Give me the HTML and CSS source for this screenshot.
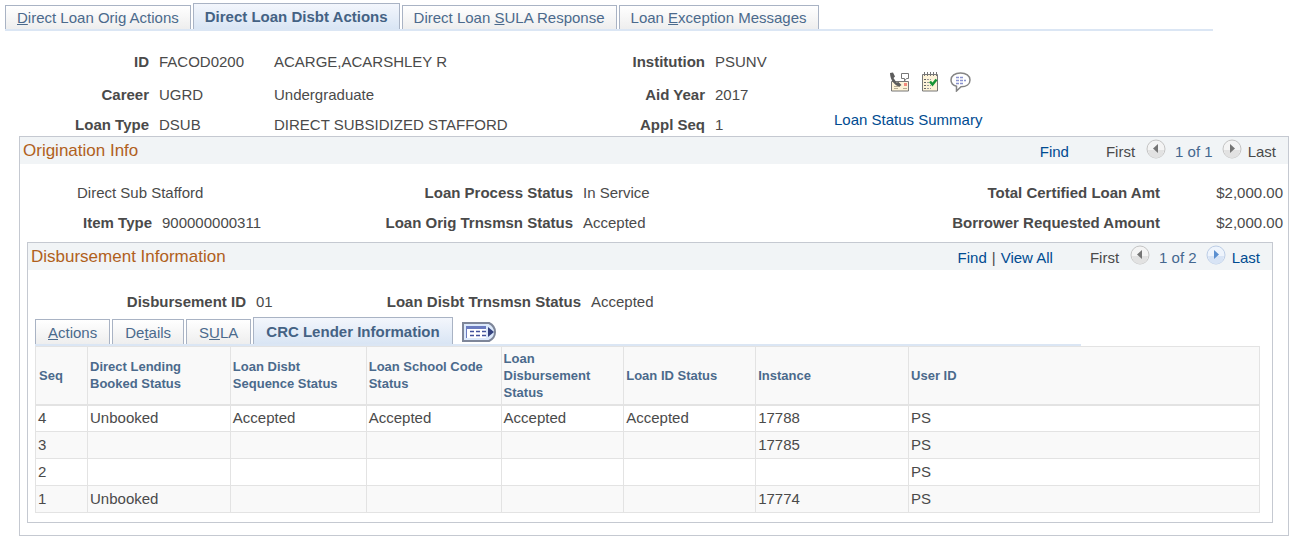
FILE: index.html
```html
<!DOCTYPE html>
<html lang="en">
<head>
    <meta charset="utf-8">
    <title>Direct Loan Disbt Actions</title>
    <link rel="stylesheet" href="styles.css">
</head>
<body>
    <nav class="tabs page-tabs">
        <a class="tab" href="#"><u>D</u>irect Loan Orig Actions</a>
        <a class="tab active" href="#">Direct Loan Disbt Actions</a>
        <a class="tab" href="#">Direct Loan <u>S</u>ULA Response</a>
        <a class="tab" href="#">Loan <u>E</u>xception Messages</a>
    </nav>

    <div class="student">
        <span class="label">ID</span><span>FACOD0200</span><span>ACARGE,ACARSHLEY R</span>
        <span class="label">Institution</span><span>PSUNV</span>
        <span class="label">Career</span><span>UGRD</span><span>Undergraduate</span>
        <span class="label">Aid Year</span><span>2017</span>
        <span class="label">Loan Type</span><span>DSUB</span><span>DIRECT SUBSIDIZED STAFFORD</span>
        <span class="label">Appl Seq</span><span>1</span>
        <div class="side">
            <div class="icons">
                <button class="icon-btn" aria-label="Communications">
                    <svg width="21" height="20" viewBox="0 0 21 20">
                        <path d="M2.500 9.500h17v9.500h-17z" fill="#fdf3d8" stroke="#777"/>
                        <path d="M5 14.500h6M5 16.500h4M14 16.500h4" stroke="#b5ab92"/>
                        <path d="M12.500 1.500h7v5h-2l-2 2.500v-2.500h-3z" fill="#fff" stroke="#777"/>
                        <path d="M1 1l3-.5 2 4-1.500 1.500 3 4.500 2-.5 3 3-2 1.500C6 14 1 8 1 1z" fill="#5c5c5c"/>
                        <path d="M15 11h3v3h-3z" fill="#f28a7c"/>
                    </svg>
                </button>
                <button class="icon-btn" aria-label="Checklists">
                    <svg width="18" height="20" viewBox="0 0 18 20">
                        <path d="M1.500 2.500h15v16.500h-15z" fill="#fdf3d8" stroke="#777"/>
                        <path d="M3.500 0v4M6.500 0v4M9.500 0v4M12.500 0v4M15.500 0v4" stroke="#777"/>
                        <path d="M3 7.500h2M3 10.500h2M3 13.500h2M3 16.500h2" stroke="#666"/>
                        <path d="M6 7.500h4M6 10.500h2M6 13.500h4M6 16.500h4" stroke="#999" stroke-dasharray="2 1"/>
                        <path d="M9 9.500l2.500 3 4-5" fill="none" stroke="#169436" stroke-width="2.500"/>
                    </svg>
                </button>
                <button class="icon-btn" aria-label="Comments">
                    <svg width="21" height="20" viewBox="0 0 21 20">
                        <path d="M10.500 1C5 1 1 3.800 1 8c0 3 2 5.300 5.500 6.300V19l4.500-4.200c5.500 0 9-2.800 9-6.800 0-4.200-4-7-9.500-7z" fill="#fff" stroke="#858585" stroke-width="1.500"/>
                        <path d="M6 5.500h8M6 8.500h10M6 11.500h8" stroke="#8b93cf" stroke-width="1.500" stroke-dasharray="3 1"/>
                    </svg>
                </button>
            </div>
            <a class="link" href="#">Loan Status Summary</a>
        </div>
    </div>

    <section class="panel origination">
        <div class="panel-head">
            <h2>Origination Info</h2>
            <div class="pager">
                <a class="link" href="#">Find</a>
                <span class="first">First</span>
                <button class="arrow" aria-label="Previous"><svg width="20" height="20" viewBox="0 0 20 20"><circle cx="10" cy="10" r="9" fill="#f4f4f4" stroke="#c4c4c4"/><path d="M2 11a8 8 0 0 0 16 0z" fill="#e2e2e2"/><path d="M12 5v9L7 9.500z" fill="#757575"/></svg></button>
                <span class="count">1 of 1</span>
                <button class="arrow" aria-label="Next"><svg width="20" height="20" viewBox="0 0 20 20"><circle cx="10" cy="10" r="9" fill="#f4f4f4" stroke="#c4c4c4"/><path d="M2 11a8 8 0 0 0 16 0z" fill="#e2e2e2"/><path d="M8 5v9l5-4.500z" fill="#757575"/></svg></button>
                <span class="last">Last</span>
            </div>
        </div>
        <div class="loan">
            <span class="loan-name">Direct Sub Stafford</span>
            <span class="label">Loan Process Status</span><span>In Service</span>
            <span class="label">Total Certified Loan Amt</span><span class="amount">$2,000.00</span>
            <span class="label">Item Type</span><span>900000000311</span>
            <span class="label">Loan Orig Trnsmsn Status</span><span>Accepted</span>
            <span class="label">Borrower Requested Amount</span><span class="amount">$2,000.00</span>
        </div>

        <section class="panel disbursement">
            <div class="panel-head">
                <h2>Disbursement Information</h2>
                <div class="pager">
                    <a class="link" href="#">Find</a>
                    <span class="bar">|</span>
                    <a class="link" href="#">View All</a>
                    <span class="first">First</span>
                    <button class="arrow" aria-label="Previous"><svg width="20" height="20" viewBox="0 0 20 20"><circle cx="10" cy="10" r="9" fill="#f4f4f4" stroke="#c4c4c4"/><path d="M2 11a8 8 0 0 0 16 0z" fill="#e2e2e2"/><path d="M12 5v9L7 9.500z" fill="#757575"/></svg></button>
                    <span class="count">1 of 2</span>
                    <button class="arrow" aria-label="Next"><svg width="20" height="20" viewBox="0 0 20 20"><circle cx="10" cy="10" r="9" fill="#eef4fc" stroke="#bccde6"/><path d="M2 11a8 8 0 0 0 16 0z" fill="#d8e4f5"/><path d="M8 5v9l5-4.500z" fill="#5b8fd0"/></svg></button>
                    <a class="link last" href="#">Last</a>
                </div>
            </div>
            <div class="disbt">
                <span class="label">Disbursement ID</span><span>01</span>
                <span class="label">Loan Disbt Trnsmsn Status</span><span>Accepted</span>
            </div>
            <nav class="tabs grid-tabs">
                <a class="tab" href="#"><u>A</u>ctions</a>
                <a class="tab" href="#">De<u>t</u>ails</a>
                <a class="tab" href="#">S<u>U</u>LA</a>
                <a class="tab active" href="#">CRC Lender Information</a>
                <button class="icon-btn show-all" aria-label="Show all columns">
                    <svg width="34" height="20" viewBox="0 0 34 20">
                        <path d="M1 1h26q6 3 6 9t-6 9H1z" fill="#dce9fb" stroke="#7e8699" stroke-width="2"/>
                        <path d="M4 4h20v12H4z" fill="#fff"/>
                        <path d="M4 5.500h20" stroke="#6a7bc0" stroke-width="3"/>
                        <path d="M4.500 5v11" stroke="#6a7bc0"/>
                        <path d="M8 9.500h16M8 13.500h16" stroke="#41519b" stroke-width="1.500" stroke-dasharray="4 2"/>
                        <path d="M26 5v10l6-5z" fill="#34427f"/>
                    </svg>
                </button>
            </nav>
            <table class="grid">
                <colgroup>
                    <col class="c-seq"><col class="c-booked"><col class="c-seqstat"><col class="c-school">
                    <col class="c-disbt"><col class="c-loanid"><col class="c-instance"><col>
                </colgroup>
                <thead>
                    <tr>
                        <th>Seq</th>
                        <th>Direct Lending<br>Booked Status</th>
                        <th>Loan Disbt<br>Sequence Status</th>
                        <th>Loan School Code<br>Status</th>
                        <th>Loan<br>Disbursement<br>Status</th>
                        <th>Loan ID Status</th>
                        <th>Instance</th>
                        <th>User ID</th>
                    </tr>
                </thead>
                <tbody>
                    <tr><td>4</td><td>Unbooked</td><td>Accepted</td><td>Accepted</td><td>Accepted</td><td>Accepted</td><td>17788</td><td>PS</td></tr>
                    <tr><td>3</td><td></td><td></td><td></td><td></td><td></td><td>17785</td><td>PS</td></tr>
                    <tr><td>2</td><td></td><td></td><td></td><td></td><td></td><td></td><td>PS</td></tr>
                    <tr><td>1</td><td>Unbooked</td><td></td><td></td><td></td><td></td><td>17774</td><td>PS</td></tr>
                </tbody>
            </table>
        </section>
    </section>
</body>
</html>
```

FILE: styles.css
```css
* {
    box-sizing: border-box;
}
body {
    margin: 0;
    background: #fff;
    color: #4a4a4a;
    font-family: "Liberation Sans", Arial, sans-serif;
    font-size: 15px;
    line-height: 18px;
}
button {
    border: none;
    padding: 0;
    background: none;
    cursor: pointer;
}
svg {
    display: block;
}
.link {
    color: #004b91;
    text-decoration: none;
}
.label {
    font-weight: bold;
    text-align: right;
}

/* tabs */
.tabs {
    display: flex;
    align-items: flex-end;
    gap: 2px;
}
.tab {
    height: 24px;
    padding: 3px 11px 0;
    border: 1px solid #a9b3c4;
    border-bottom: none;
    background: linear-gradient(#fff, #eee);
    color: #4b6a8c;
    text-decoration: none;
    white-space: nowrap;
}
.tab.active {
    height: 26px;
    padding-top: 4px;
    background: linear-gradient(#f3f6fc, #d9e5f4);
    font-weight: bold;
    color: #446284;
}
.page-tabs {
    margin: 0 81px 0 5px;
    padding-top: 3px;
    border-bottom: 2px solid #dbe6f4;
}
.grid-tabs {
    margin-right: 191px;
    border-bottom: 2px solid #dbe6f4;
}
.grid-tabs .tab {
    height: 25px;
    padding: 4px 12px 0;
}
.grid-tabs .active {
    height: 27px;
    padding-top: 5px;
}
.show-all {
    margin: 0 0 2px 7px;
}

/* student header */
.student {
    display: grid;
    grid-template-columns: 149fr 105fr 300fr 121fr 109fr 460fr;
    grid-template-rows: 18px 33px 30px;
    column-gap: 10px;
    align-items: end;
    padding: 22px 0 2px;
}
.side {
    grid-column: 6;
    grid-row: 1 / 4;
    display: flex;
    flex-direction: column;
    gap: 19px;
    padding-bottom: 5px;
}
.icons {
    display: flex;
    gap: 11px;
    padding-left: 55px;
}

/* panels */
.panel {
    border: 1px solid #c5c9d1;
}
.origination {
    margin: 0 5px 0 19px;
    padding-bottom: 12px;
}
.disbursement {
    margin: 0 15px 0 7px;
    padding-bottom: 9px;
}
.panel-head {
    display: flex;
    justify-content: space-between;
    align-items: center;
    height: 27px;
    padding: 0 12px 0 3px;
    background: #f1f4f6;
}
.panel-head h2 {
    margin: 0;
    font-size: 17px;
    font-weight: normal;
    color: #b0601c;
}
.pager {
    display: flex;
    align-items: flex-end;
    align-self: flex-start;
    height: 24px;
}
.bar {
    margin: 0 5px;
}
.first {
    margin: 0 11px 0 37px;
}
.count {
    margin: 0 9px;
    color: #44678f;
}
.last {
    margin-left: 6px;
}
.arrow {
    align-self: flex-start;
    margin-top: 2px;
}
.loan {
    display: grid;
    grid-template-columns: 132fr 150fr 251fr 200fr 367fr 113fr;
    gap: 12px 10px;
    padding: 20px 5px 10px 0;
}
.loan-name {
    grid-column: span 2;
    padding-left: 57px;
}
.amount {
    text-align: right;
}
.disbt {
    display: grid;
    grid-template-columns: 218fr 100fr 215fr 681fr;
    column-gap: 10px;
    padding: 23px 0 6px;
}
.grid-tabs,
.grid {
    margin-left: 7px;
}

/* disbursement grid */
.grid {
    width: calc(100% - 19px);
    table-layout: fixed;
    border-collapse: collapse;
}
.grid th,
.grid td {
    padding: 0 2px;
    border: 1px solid #e3e3e3;
    text-align: left;
}
.grid th {
    height: 58px;
    border-bottom-width: 2px;
    background: #f9f9f9;
    color: #4b6a8c;
    font-size: 13px;
    line-height: 17px;
}
.grid th:first-child {
    padding-left: 3px;
}
.grid td {
    height: 27px;
}
.grid tbody tr:nth-child(even) {
    background: #f9f9f9;
}
.c-seq { width: 4.25%; }
.c-booked { width: 11.67%; }
.c-seqstat { width: 11.1%; }
.c-school { width: 11.02%; }
.c-disbt { width: 10.02%; }
.c-loanid { width: 10.78%; }
.c-instance { width: 12.49%; }
```
